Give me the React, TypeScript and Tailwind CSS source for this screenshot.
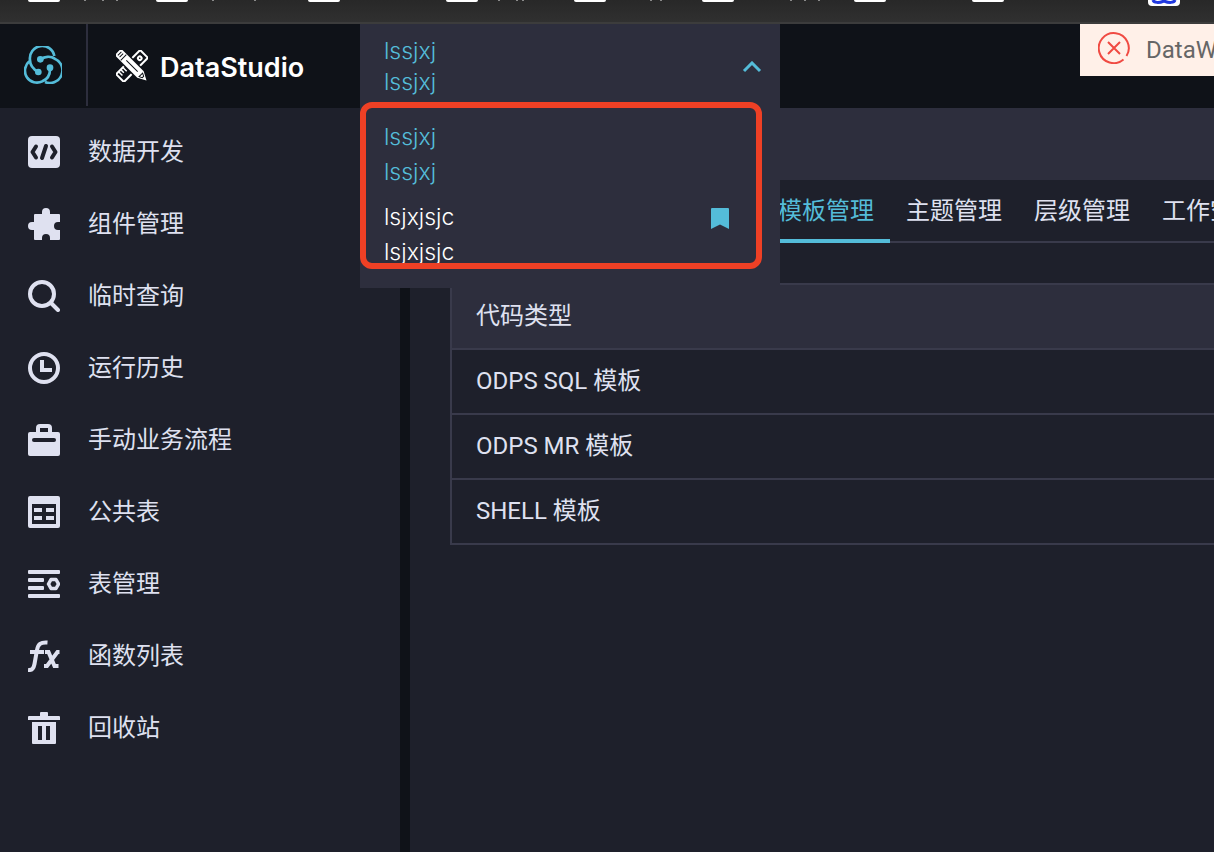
import React from "react";

const bookmarks = [
  { cell: "w-32", marks: ["ml-6", "ml-4", "ml-3"] },
  { cell: "w-[152px]", marks: ["ml-6", "ml-10"] },
  { cell: "w-[138px]", marks: [] },
  { cell: "w-32", marks: ["ml-5", "ml-4", "ml-1"] },
  { cell: "w-32", marks: ["ml-11", "ml-2"] },
  { cell: "w-[152px]", marks: ["ml-14", "ml-3", "ml-3"] },
  { cell: "w-[118px]", marks: [] },
  { cell: "w-[176px]", marks: [] },
];

const CodeIcon = () => (
  <svg viewBox="0 0 32 32" className="size-8" aria-hidden="true">
    <rect width="32" height="32" rx="4" fill="currentColor" />
    <g fill="none" stroke="#1e202b" strokeWidth="4" strokeLinecap="round" strokeLinejoin="round">
      <path d="M8 10.500L4.500 16l3.500 5.500M24 10.500L27.500 16 24 21.500" />
      <path d="M18 10l-4 12" />
    </g>
  </svg>
);

const PuzzleIcon = () => (
  <svg viewBox="0 0 32 32" className="size-8" aria-hidden="true" fill="currentColor">
    <path d="M7 6h7V4a4 4 0 0 1 8 0v2h9a1 1 0 0 1 1 1v7h-2a4 4 0 0 0 0 8h2v9a1 1 0 0 1-1 1h-9v-2a4 4 0 0 0-8 0v2H7a1 1 0 0 1-1-1v-9H4a4 4 0 0 1 0-8h2V7a1 1 0 0 1 1-1z" />
  </svg>
);

const SearchIcon = () => (
  <svg viewBox="0 0 32 32" className="size-8" aria-hidden="true" fill="none" stroke="currentColor" strokeWidth="4">
    <circle cx="14" cy="14" r="12" />
    <path d="M23 23l7 7" strokeLinecap="round" />
  </svg>
);

const ClockIcon = () => (
  <svg viewBox="0 0 32 32" className="size-8" aria-hidden="true" fill="none" stroke="currentColor" strokeWidth="4">
    <circle cx="16" cy="16" r="14" />
    <path d="M14 8v10h10" />
  </svg>
);

const CaseIcon = () => (
  <svg viewBox="0 0 32 32" className="size-8" aria-hidden="true">
    <path d="M10 9V4a2 2 0 0 1 2-2h8a2 2 0 0 1 2 2v5" fill="none" stroke="currentColor" strokeWidth="4" />
    <rect y="8" width="32" height="24" rx="2" fill="currentColor" />
    <rect x="4" y="14" width="24" height="4" rx="2" fill="#1e202b" />
  </svg>
);

const TableIcon = () => (
  <svg viewBox="0 0 32 32" className="size-8" aria-hidden="true" fill="currentColor">
    <path
      fillRule="evenodd"
      d="M2 0h28a2 2 0 0 1 2 2v28a2 2 0 0 1-2 2H2a2 2 0 0 1-2-2V2a2 2 0 0 1 2-2zM4 8v20h24V8z"
    />
    <path d="M6 12h8v4H6zM18 12h8v4h-8zM6 20h8v4H6zM18 20h8v4h-8z" />
  </svg>
);

const TableManageIcon = () => (
  <svg viewBox="0 0 32 32" className="size-8" aria-hidden="true" fill="currentColor">
    <rect y="2" width="32" height="4" rx="1" />
    <rect y="10" width="16" height="4" rx="1" />
    <rect y="18" width="16" height="4" rx="1" />
    <rect y="26" width="32" height="4" rx="1" />
    <path d="M23 11.500h5L30.500 16 28 20.500h-5L20.500 16z" fill="none" stroke="currentColor" strokeWidth="3.500" strokeLinejoin="round" />
  </svg>
);

const FunctionIcon = () => (
  <svg viewBox="0 0 32 32" className="size-8" aria-hidden="true" fill="none" stroke="currentColor" strokeWidth="4">
    <path d="M0 30c4 .5 5.500-1 6.500-6l2.500-14c1-6 3.500-8 10.500-7.500" />
    <path d="M2 12h14M17 12h3.500l6 14h4M31.500 12h-2L19 26h-3" />
  </svg>
);

const TrashIcon = () => (
  <svg viewBox="0 0 32 32" className="size-8" aria-hidden="true" fill="currentColor">
    <path d="M13 0h6a1 1 0 0 1 1 1v3h11a1 1 0 0 1 1 1v3H0V5a1 1 0 0 1 1-1h11V1a1 1 0 0 1 1-1z" />
    <path fillRule="evenodd" d="M4 10h24v21a1 1 0 0 1-1 1H5a1 1 0 0 1-1-1zM10 14v14h4V14zM18 14v14h4V14z" />
  </svg>
);

const menu = [
  { label: "数据开发", Icon: CodeIcon },
  { label: "组件管理", Icon: PuzzleIcon },
  { label: "临时查询", Icon: SearchIcon },
  { label: "运行历史", Icon: ClockIcon },
  { label: "手动业务流程", Icon: CaseIcon },
  { label: "公共表", Icon: TableIcon },
  { label: "表管理", Icon: TableManageIcon },
  { label: "函数列表", Icon: FunctionIcon },
  { label: "回收站", Icon: TrashIcon },
];

const tabs = ["模板管理", "主题管理", "层级管理", "工作空"];
const templates = ["ODPS SQL 模板", "ODPS MR 模板", "SHELL 模板"];

function BrowserBar() {
  return (
    <div className="flex h-6 items-start overflow-hidden border-b-2 border-[#3c3c3c] bg-linear-to-b from-[#282828] to-[#303030] pl-7">
      {bookmarks.map((b, i) => (
        <div key={i} className={`flex shrink-0 items-start ${b.cell}`}>
          <span className="h-0.5 w-8 rounded-b-xs bg-white" />
          {b.marks.map((m, j) => (
            <span key={j} className={`h-px w-0.5 bg-[#8a8a8a] ${m}`} />
          ))}
        </div>
      ))}
      <span className="h-1.5 w-8 shrink-0 rounded-b-sm bg-white">
        <svg viewBox="0 0 32 6" className="h-1.5 w-8" aria-hidden="true">
          <path d="M5 0c1 3 6 3 11 1 5 2 10 2 11-1" fill="none" stroke="#2038e0" strokeWidth="3" />
        </svg>
      </span>
    </div>
  );
}

function Header() {
  return (
    <header className="flex h-[84px] items-start bg-[#0f1218]">
      <a href="#" aria-label="DataWorks" className="flex h-[82px] w-[88px] items-center border-r-2 border-[#2d2e3d] pl-6 text-[#54bcd9]">
        <svg viewBox="0 0 114 114" className="size-[38px]" aria-hidden="true" fill="none" stroke="currentColor" strokeWidth="8">
          <path d="M43 78C26 69 18 58 18 42A37 37 0 0 1 91 30" />
          <path d="M49 40C62 32 80 29 92 38A36 36 0 0 1 63 108" />
          <path d="M78 65C79 85 70 100 55 106A36 36 0 0 1 16 46" />
          <g fill="currentColor" stroke="none">
            <circle cx="49" cy="40" r="10" />
            <circle cx="78" cy="65" r="10" />
            <circle cx="43" cy="78" r="10" />
          </g>
        </svg>
      </a>
      <div className="flex h-[84px] items-center gap-3 pl-7 text-white">
        <svg viewBox="0 0 32 32" className="size-8" aria-hidden="true">
          <g transform="rotate(-45 16 16)" fill="none" stroke="currentColor" strokeWidth="2">
            <rect x="-1" y="10.500" width="34" height="11" rx="1" />
            <path d="M2.500 11v5M5.500 11v4M8.500 11v5" strokeWidth="1.500" />
            <circle cx="27" cy="16" r="1.800" />
          </g>
          <g transform="rotate(45 16 16)">
            <path d="M-5 10h34l9 6-9 6H-5z" fill="#0f1218" />
            <path d="M-2 11.500h30l8.500 4.500-8.500 4.500H-2a2 2 0 0 1-2-2v-5a2 2 0 0 1 2-2z" fill="currentColor" />
            <path d="M-1.500 13.500v5M1 13.500v5M4 12v8M8 16h16M28.500 13.500l3 1.500v2l-3 1.500z" fill="none" stroke="#0f1218" strokeWidth="1" />
          </g>
        </svg>
        <h1 className="pt-1 font-[Inter,sans-serif] text-[27px] leading-8 font-semibold">DataStudio</h1>
      </div>
    </header>
  );
}

function WorkspaceSelect() {
  return (
    <div className="absolute top-6 left-[360px] h-[264px] w-[420px] bg-[#2d2e3d] font-[Inter,sans-serif] text-[23px] font-light text-[#54bcd9]">
      <button type="button" aria-expanded="true" className="flex h-[78px] w-full items-center justify-between pt-2 pr-[18px] pl-6 text-left leading-[31px]">
        <span>
          <span className="block">lssjxj</span>
          <span className="block">lssjxj</span>
        </span>
        <svg viewBox="0 0 20 12" className="h-3 w-5" aria-hidden="true">
          <path d="M2 10l8-8 8 8" fill="none" stroke="currentColor" strokeWidth="3" />
        </svg>
      </button>
      <ul className="h-[167px] w-[402px] overflow-hidden rounded-xl border-6 border-[#ee4025] pt-3 leading-[35px]">
        <li>
          <button type="button" className="block w-full pl-[18px] text-left">
            <span className="block">lssjxj</span>
            <span className="block">lssjxj</span>
          </button>
        </li>
        <li className="pt-2.5 text-white">
          <button type="button" className="flex w-full items-start justify-between pr-[27px] pl-[18px] text-left">
            <span>
              <span className="block">lsjxjsjc</span>
              <span className="block">lsjxjsjc</span>
            </span>
            <svg viewBox="0 0 18 21" className="mt-2 h-[21px] w-[18px] text-[#54bcd9]" aria-hidden="true">
              <path d="M1 0h16a1 1 0 0 1 1 1v20l-9-4.500L0 21V1a1 1 0 0 1 1-1z" fill="currentColor" />
            </svg>
          </button>
        </li>
      </ul>
    </div>
  );
}

function ErrorToast() {
  return (
    <div role="alert" className="absolute top-6 right-0 flex h-[52px] w-[134px] items-center gap-4 overflow-hidden bg-[#fff0e8] pl-[18px] text-2xl text-[#666666]">
      <svg viewBox="0 0 32 32" className="mb-1 size-8 shrink-0" aria-hidden="true" fill="none" stroke="#f04a42" strokeWidth="2">
        <path d="M25.500 27.500A15 15 0 1 1 28.500 24" />
        <path d="M10 10l12 12M22 10L10 22" />
      </svg>
      <span>DataW</span>
    </div>
  );
}

export default function App() {
  return (
    <div className="relative flex min-h-screen flex-col overflow-hidden bg-[#0f1218] font-[Roboto,'Noto_Sans_CJK_SC',sans-serif] text-2xl text-[#dfe1f0]">
      <BrowserBar />
      <Header />
      <div className="flex grow gap-2.5">
        <nav className="w-[400px] shrink-0 bg-[#1e202b] pt-2">
          {menu.map(({ label, Icon }) => (
            <a key={label} href="#" className="flex h-[72px] items-center gap-7 pl-7">
              <Icon />
              <span>{label}</span>
            </a>
          ))}
        </nav>

        <main className="min-w-0 grow overflow-hidden bg-[#1e202b]">
          <div className="h-[72px] bg-[#2d2e3d]" />
          <div role="tablist" className="flex h-[63px] border-b-2 border-[#393a4b] pl-[352px]">
            {tabs.map((tab, i) => (
              <button
                key={tab}
                type="button"
                role="tab"
                aria-selected={i === 0}
                className={
                  i === 0
                    ? "h-[63px] shrink-0 border-b-4 border-[#54bcd9] px-4 pt-0.5 whitespace-nowrap text-[#54bcd9]"
                    : "h-[63px] shrink-0 border-b-4 border-transparent px-4 pt-0.5 whitespace-nowrap"
                }
              >
                {tab}
              </button>
            ))}
          </div>
          <div className="mt-10 overflow-hidden pl-10">
            <table className="w-full border-collapse border-2 border-r-0 border-[#393a4b] text-left">
              <thead>
                <tr className="h-[65px] bg-[#2d2e3d]">
                  <th className="pb-0.5 pl-6 font-normal">代码类型</th>
                </tr>
              </thead>
              <tbody>
                {templates.map((name) => (
                  <tr key={name} className="h-[65px] border-t-2 border-[#393a4b]">
                    <td className="pb-0.5 pl-6">{name}</td>
                  </tr>
                ))}
              </tbody>
            </table>
          </div>
        </main>
      </div>
      <WorkspaceSelect />
      <ErrorToast />
    </div>
  );
}
